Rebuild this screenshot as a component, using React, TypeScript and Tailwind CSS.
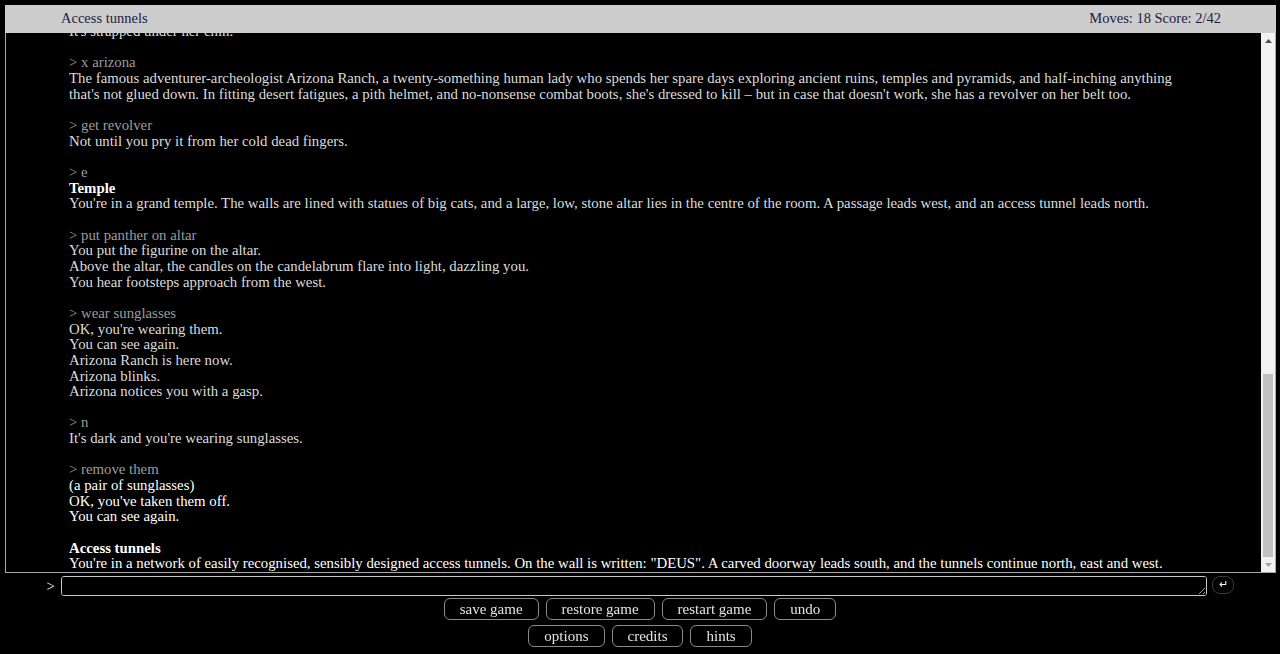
import React from 'react';

type Line = { text: string; kind?: 'cmd' | 'bold' | 'new' | 'newbold' };

// Visible tail of the transcript, oldest first. Blocks are separated by a blank line.
const transcript: Line[][] = [
  [{ text: "It's strapped under her chin." }],
  [
    { text: '> x arizona', kind: 'cmd' },
    { text: "The famous adventurer-archeologist Arizona Ranch, a twenty-something human lady who spends her spare days exploring ancient ruins, temples and pyramids, and half-inching anything that's not glued down. In fitting desert fatigues, a pith helmet, and no-nonsense combat boots, she's dressed to kill – but in case that doesn't work, she has a revolver on her belt too." },
  ],
  [{ text: '> get revolver', kind: 'cmd' }, { text: 'Not until you pry it from her cold dead fingers.' }],
  [
    { text: '> e', kind: 'cmd' },
    { text: 'Temple', kind: 'bold' },
    { text: "You're in a grand temple. The walls are lined with statues of big cats, and a large, low, stone altar lies in the centre of the room. A passage leads west, and an access tunnel leads north." },
  ],
  [
    { text: '> put panther on altar', kind: 'cmd' },
    { text: 'You put the figurine on the altar.' },
    { text: 'Above the altar, the candles on the candelabrum flare into light, dazzling you.' },
    { text: 'You hear footsteps approach from the west.' },
  ],
  [
    { text: '> wear sunglasses', kind: 'cmd' },
    { text: "OK, you're wearing them." },
    { text: 'You can see again.' },
    { text: 'Arizona Ranch is here now.' },
    { text: 'Arizona blinks.' },
    { text: 'Arizona notices you with a gasp.' },
  ],
  [{ text: '> n', kind: 'cmd' }, { text: "It's dark and you're wearing sunglasses." }],
  [
    { text: '> remove them', kind: 'cmd' },
    { text: '(a pair of sunglasses)', kind: 'new' },
    { text: "OK, you've taken them off.", kind: 'new' },
    { text: 'You can see again.', kind: 'new' },
  ],
  [
    { text: 'Access tunnels', kind: 'newbold' },
    { text: 'You\'re in a network of easily recognised, sensibly designed access tunnels. On the wall is written: "DEUS". A carved doorway leads south, and the tunnels continue north, east and west.', kind: 'new' },
  ],
];

const lineClass: Record<string, string> = {
  cmd: 'text-[#9c9c9c]',
  bold: 'font-bold text-white',
  new: 'text-white',
  newbold: 'font-bold text-white',
  plain: 'text-[#dcdcdc]',
};

const buttonsTop = ['save game', 'restore game', 'restart game', 'undo'];
const buttonsBottom = ['options', 'credits', 'hints'];

function GameButton({ label }: { label: string }) {
  return (
    <button className="h-[22px] px-[15px] rounded-[6px] border border-[#8a8a8a] bg-black text-[#e4e4e4] text-[15px] leading-none">
      {label}
    </button>
  );
}

// classic scrollbar, thumb parked at the bottom
function ScrollBar() {
  return (
    <div className="w-[14px] shrink-0 bg-[#f1f1f1] flex flex-col">
      <div className="h-[15px] flex items-center justify-center">
        <svg width="7" height="4" viewBox="0 0 7 4">
          <path d="M0 4 L3.5 0 L7 4 Z" fill="#505050" />
        </svg>
      </div>
      <div className="flex-1 flex flex-col justify-end px-[2px]">
        <div className="h-[183px] bg-[#c1c1c1]" />
      </div>
      <div className="h-[15px] flex items-center justify-center">
        <svg width="7" height="4" viewBox="0 0 7 4">
          <path d="M0 0 L7 0 L3.5 4 Z" fill="#a3a3a3" />
        </svg>
      </div>
    </div>
  );
}

export default function App() {
  return (
    <div
      className="w-[1280px] h-[654px] bg-black overflow-hidden pt-[5px]"
      style={{ fontFamily: '"Liberation Serif", "Times New Roman", serif' }}
    >
      <div className="ml-[5px] w-[1271px]">
        {/* status line */}
        <div className="h-[28px] bg-[#cdcdcd] flex items-center justify-between pl-[56px] pr-[55px] text-[#1b1b45] text-[14.5px]">
          <span>Access tunnels</span>
          <span>Moves: 18 Score: 2/42</span>
        </div>

        {/* story window */}
        <div className="h-[540px] flex border-x border-b border-[#a8a8a8] bg-black">
          <div className="flex-1 min-w-0 overflow-hidden flex flex-col justify-end pl-[63px] pr-[62px] text-[14.8px] leading-[15.65px]">
            {transcript.map((block, i) => (
              <div key={i} className={i === 0 ? '' : 'mt-[15.65px]'}>
                {block.map((ln, j) => (
                  <div key={j} className={lineClass[ln.kind ?? 'plain']}>
                    {ln.text}
                  </div>
                ))}
              </div>
            ))}
          </div>
          <ScrollBar />
        </div>
      </div>

      {/* command line */}
      <div className="mt-[3px] flex items-center h-[20px]">
        <span className="w-[56px] pr-[1px] text-right text-white text-[15px]">&gt;</span>
        <textarea
          rows={1}
          className="ml-[5px] w-[1146px] h-[20px] bg-black border border-[#c8c8c8] rounded-[3px] text-white text-[14px] px-1 outline-none"
        />
        <button className="ml-[5px] -mt-[3px] w-[22px] h-[18px] rounded-[8px] border border-[#3a3a3a] bg-black text-white text-[11px] leading-none flex items-center justify-center">
          ↵
        </button>
      </div>

      {/* action buttons */}
      <div className="mt-[2px] flex justify-center gap-[7px]">
        {buttonsTop.map((b) => (
          <GameButton key={b} label={b} />
        ))}
      </div>
      <div className="mt-[5px] flex justify-center gap-[7px]">
        {buttonsBottom.map((b) => (
          <GameButton key={b} label={b} />
        ))}
      </div>
    </div>
  );
}
